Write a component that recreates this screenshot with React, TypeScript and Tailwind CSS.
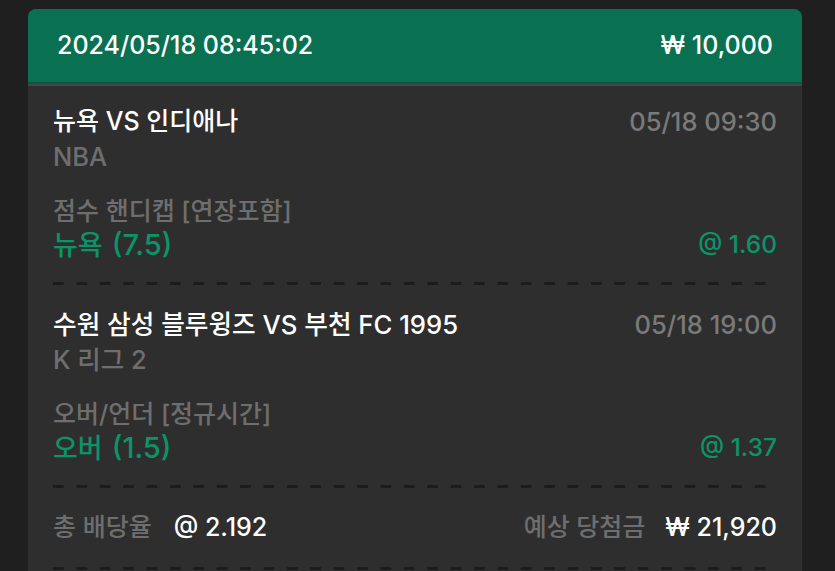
import React from "react";

const font = { fontFamily: 'Inter, "Noto Sans CJK KR", sans-serif' };

function Dashed() {
  return (
    <div className="h-[3px] w-full bg-[linear-gradient(to_right,#1c1c1c_0px,#1c1c1c_11px,transparent_11px)] bg-[length:23.4px_3px] bg-repeat-x" />
  );
}

function Match({
  title,
  time,
  league,
  market,
  pickKo,
  pickNum,
  odds,
  pt,
  titleSize,
}: {
  title: string;
  time: string;
  league: string;
  market: string;
  pickKo: string;
  pickNum: string;
  odds: string;
  pt: string;
  titleSize: string;
}) {
  return (
    <div className={pt}>
      <div className="flex items-center justify-between">
        <div className={`${titleSize} font-medium leading-[35px] text-white`}>{title}</div>
        <div className="text-[25.5px] font-medium leading-[35px] text-[#7a7a7a]">{time}</div>
      </div>
      <div className="text-[25.5px] font-medium leading-[35px] text-[#6e6e6e]">{league}</div>
      <div className="mt-[21px] text-[25px] font-medium leading-[33px] text-[#6e6e6e]">{market}</div>
      <div className="mb-[21px] flex h-[33px] items-center justify-between">
        <div className="flex items-baseline font-medium leading-[33px] text-[#0b9468]">
          <span className="text-[27px]">{pickKo}</span>
          <span className="ml-[9px] text-[29px]">{pickNum}</span>
        </div>
        <div className="text-[24.5px] font-medium leading-[33px] text-[#0b9468]">{odds}</div>
      </div>
      <Dashed />
    </div>
  );
}

export default function App() {
  return (
    <div className="h-[571px] overflow-hidden bg-[#1f1f1f] pl-[28px] pr-[33px] pt-[9px]" style={font}>
      <div className="h-[600px] overflow-hidden rounded-t-[8px] bg-[#2e2e2e]">
        <div className="flex h-[73px] items-center justify-between bg-[#0a7052] px-[29px] text-[25px] font-medium text-white">
          <span>2024/05/18 08:45:02</span>
          <span>₩ 10,000</span>
        </div>
        <div className="h-[2px] bg-[#06583f]" />
        <div className="h-[2px] bg-[#454545]" />
        <div className="px-[25px]">
          <Match
            pt="pt-[18px]"
            titleSize="text-[25px]"
            title="뉴욕 VS 인디애나"
            time="05/18 09:30"
            league="NBA"
            market="점수 핸디캡 [연장포함]"
            pickKo="뉴욕"
            pickNum="(7.5)"
            odds="@ 1.60"
          />
          <Match
            pt="pt-[22px]"
            titleSize="text-[25.7px]"
            title="수원 삼성 블루윙즈 VS 부천 FC 1995"
            time="05/18 19:00"
            league="K 리그 2"
            market="오버/언더 [정규시간]"
            pickKo="오버"
            pickNum="(1.5)"
            odds="@ 1.37"
          />
          <div className="flex h-[79px] items-center justify-between text-[25px] font-medium">
            <div className="flex items-center gap-[22px]">
              <span className="text-[#6e6e6e]">총 배당율</span>
              <span className="text-white">@ 2.192</span>
            </div>
            <div className="flex items-center gap-[20px]">
              <span className="text-[#6e6e6e]">예상 당첨금</span>
              <span className="text-white">₩ 21,920</span>
            </div>
          </div>
          <Dashed />
        </div>
      </div>
    </div>
  );
}
